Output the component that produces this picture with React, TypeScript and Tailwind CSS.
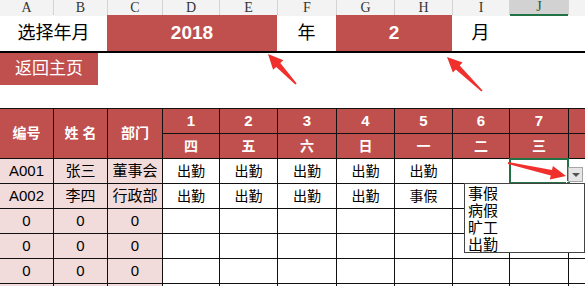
import React from 'react';

// ── Sheet geometry ────────────────────────────────────────────────────────
const LETTERS = ['A', 'B', 'C', 'D', 'E', 'F', 'G', 'H', 'I', 'J', ''];
const COLS = 'grid-cols-[53px_53px_54px_56px_57px_58px_57px_57px_56px_58px_1fr]';

const DAYS = [
  { n: '1', w: '四' },
  { n: '2', w: '五' },
  { n: '3', w: '六' },
  { n: '4', w: '日' },
  { n: '5', w: '一' },
  { n: '6', w: '二' },
  { n: '7', w: '三' },
];

const ROWS: { id: string; name: string; dept: string; marks: string[] }[] = [
  { id: 'A001', name: '张三', dept: '董事会', marks: ['出勤', '出勤', '出勤', '出勤', '出勤', '', ''] },
  { id: 'A002', name: '李四', dept: '行政部', marks: ['出勤', '出勤', '出勤', '出勤', '事假', '', ''] },
  { id: '0', name: '0', dept: '0', marks: ['', '', '', '', '', '', ''] },
  { id: '0', name: '0', dept: '0', marks: ['', '', '', '', '', '', ''] },
  { id: '0', name: '0', dept: '0', marks: ['', '', '', '', '', '', ''] },
  { id: '', name: '', dept: '', marks: ['', '', '', '', '', '', ''] },
];

const OPTIONS = ['事假', '病假', '旷工', '出勤'];

const FONT = "font-['Liberation_Sans','Noto_Sans_CJK_SC',sans-serif]";

// annotation arrow as one polygon: tapered shaft + triangular head
function arrowPoints(x1: number, y1: number, x2: number, y2: number) {
  const len = Math.hypot(x2 - x1, y2 - y1);
  const dx = (x2 - x1) / len;
  const dy = (y2 - y1) / len;
  const nx = -dy;
  const ny = dx;
  const L = 15, W = 7, t0 = 0.9, t1 = 2.8;
  const bx = x2 - dx * L;
  const by = y2 - dy * L;
  const pts = [
    [x1 + nx * t0, y1 + ny * t0],
    [bx + nx * t1, by + ny * t1],
    [bx + nx * W, by + ny * W],
    [x2, y2],
    [bx - nx * W, by - ny * W],
    [bx - nx * t1, by - ny * t1],
    [x1 - nx * t0, y1 - ny * t0],
  ];
  return pts.map(p => `${p[0].toFixed(1)},${p[1].toFixed(1)}`).join(' ');
}

export default function App() {
  return (
    <div className={`relative w-[585px] h-[286px] overflow-hidden bg-white ${FONT}`}>
      {/* Column letters */}
      <div className={`grid ${COLS} gap-x-px bg-[#d4d4d4] h-[15px] border-b border-[#c8c8c8]`}>
        {LETTERS.map((l, i) => (
          <div
            key={i}
            className={`flex items-center justify-center text-[14px] leading-none font-['Liberation_Serif',serif] ${
              l === 'J' ? 'bg-[#d2d2d2] text-[#1e5c38] border-b-2 border-[#217346]' : 'bg-[#f3f3f3] text-[#333]'
            }`}
          >
            {l}
          </div>
        ))}
      </div>

      {/* Year / month picker row */}
      <div className="flex h-[38px] border-b-2 border-black">
        <div className="w-[107px] flex items-center justify-center text-[18px] text-black">选择年月</div>
        <div className="w-[170px] flex items-center justify-center bg-[#c0504d] text-white text-[19px] font-bold">2018</div>
        <div className="w-[59px] flex items-center justify-center text-[18px] text-black">年</div>
        <div className="w-[116px] flex items-center justify-center bg-[#c0504d] text-white text-[19px] font-bold">2</div>
        <div className="w-[57px] flex items-center justify-center text-[18px] text-black">月</div>
      </div>

      {/* Back button row */}
      <div className="h-[32px] flex">
        <div className="w-[98px] bg-[#c0504d] text-white text-[17px] flex items-center pl-[15px]">返回主页</div>
      </div>
      <div className="h-[23px]" />

      {/* Attendance table */}
      <div className={`grid ${COLS} auto-rows-[24px] gap-px bg-[#111] border-t border-[#111]`}>
        {/* header */}
        <div className="row-span-2 bg-[#c0504d] text-white font-bold text-[14px] flex items-center justify-center">编号</div>
        <div className="row-span-2 bg-[#c0504d] text-white font-bold text-[14px] flex items-center justify-center">姓 名</div>
        <div className="row-span-2 bg-[#c0504d] text-white font-bold text-[14px] flex items-center justify-center">部门</div>
        {DAYS.map(d => (
          <div key={d.n} className="bg-[#c0504d] text-white font-bold text-[15px] flex items-center justify-center">{d.n}</div>
        ))}
        <div className="bg-[#c0504d]" />
        {DAYS.map(d => (
          <div key={d.w} className="bg-[#c0504d] text-white font-bold text-[14px] flex items-center justify-center">{d.w}</div>
        ))}
        <div className="bg-[#c0504d]" />

        {/* body */}
        {ROWS.map((r, ri) => (
          <React.Fragment key={ri}>
            <div className="bg-[#f2dcdb] text-black text-[15px] flex items-center justify-center">{r.id}</div>
            <div className="bg-[#f2dcdb] text-black text-[15px] flex items-center justify-center">{r.name}</div>
            <div className="bg-[#f2dcdb] text-black text-[15px] flex items-center justify-center">{r.dept}</div>
            {r.marks.map((m, mi) => (
              <div key={mi} className="bg-white text-black text-[14px] flex items-center justify-center">{m}</div>
            ))}
            <div className="bg-white" />
          </React.Fragment>
        ))}
      </div>

      {/* Active cell J3 */}
      <div className="absolute left-[509px] top-[158px] w-[60px] h-[26px] border-2 border-[#217346]" />
      <div className="absolute left-[566px] top-[181px] w-[5px] h-[5px] bg-[#217346] border border-white" />

      {/* Validation dropdown button */}
      <div className="absolute left-[568px] top-[167px] w-[15px] h-[15px] bg-[#e6e6e6] border border-[#a6a6a6] flex items-center justify-center">
        <div className="w-0 h-0 border-l-4 border-r-4 border-t-4 border-l-transparent border-r-transparent border-t-[#555]" />
      </div>

      {/* Validation list */}
      <div className="absolute left-[464px] top-[183px] w-[121px] h-[70px] bg-white border border-[#444] pl-[3px] pt-[1px]">
        {OPTIONS.map(o => (
          <div key={o} className="text-[15px] leading-[17px] text-black">{o}</div>
        ))}
      </div>

      {/* Annotation arrows */}
      <svg className="absolute inset-0 pointer-events-none" width="585" height="286" viewBox="0 0 585 286">
        <polygon points={arrowPoints(296, 84, 268, 54)} fill="#f0302c" />
        <polygon points={arrowPoints(482, 91, 447, 57)} fill="#f0302c" />
        <polygon points={arrowPoints(508, 163, 566, 176)} fill="#f0302c" />
      </svg>
    </div>
  );
}
